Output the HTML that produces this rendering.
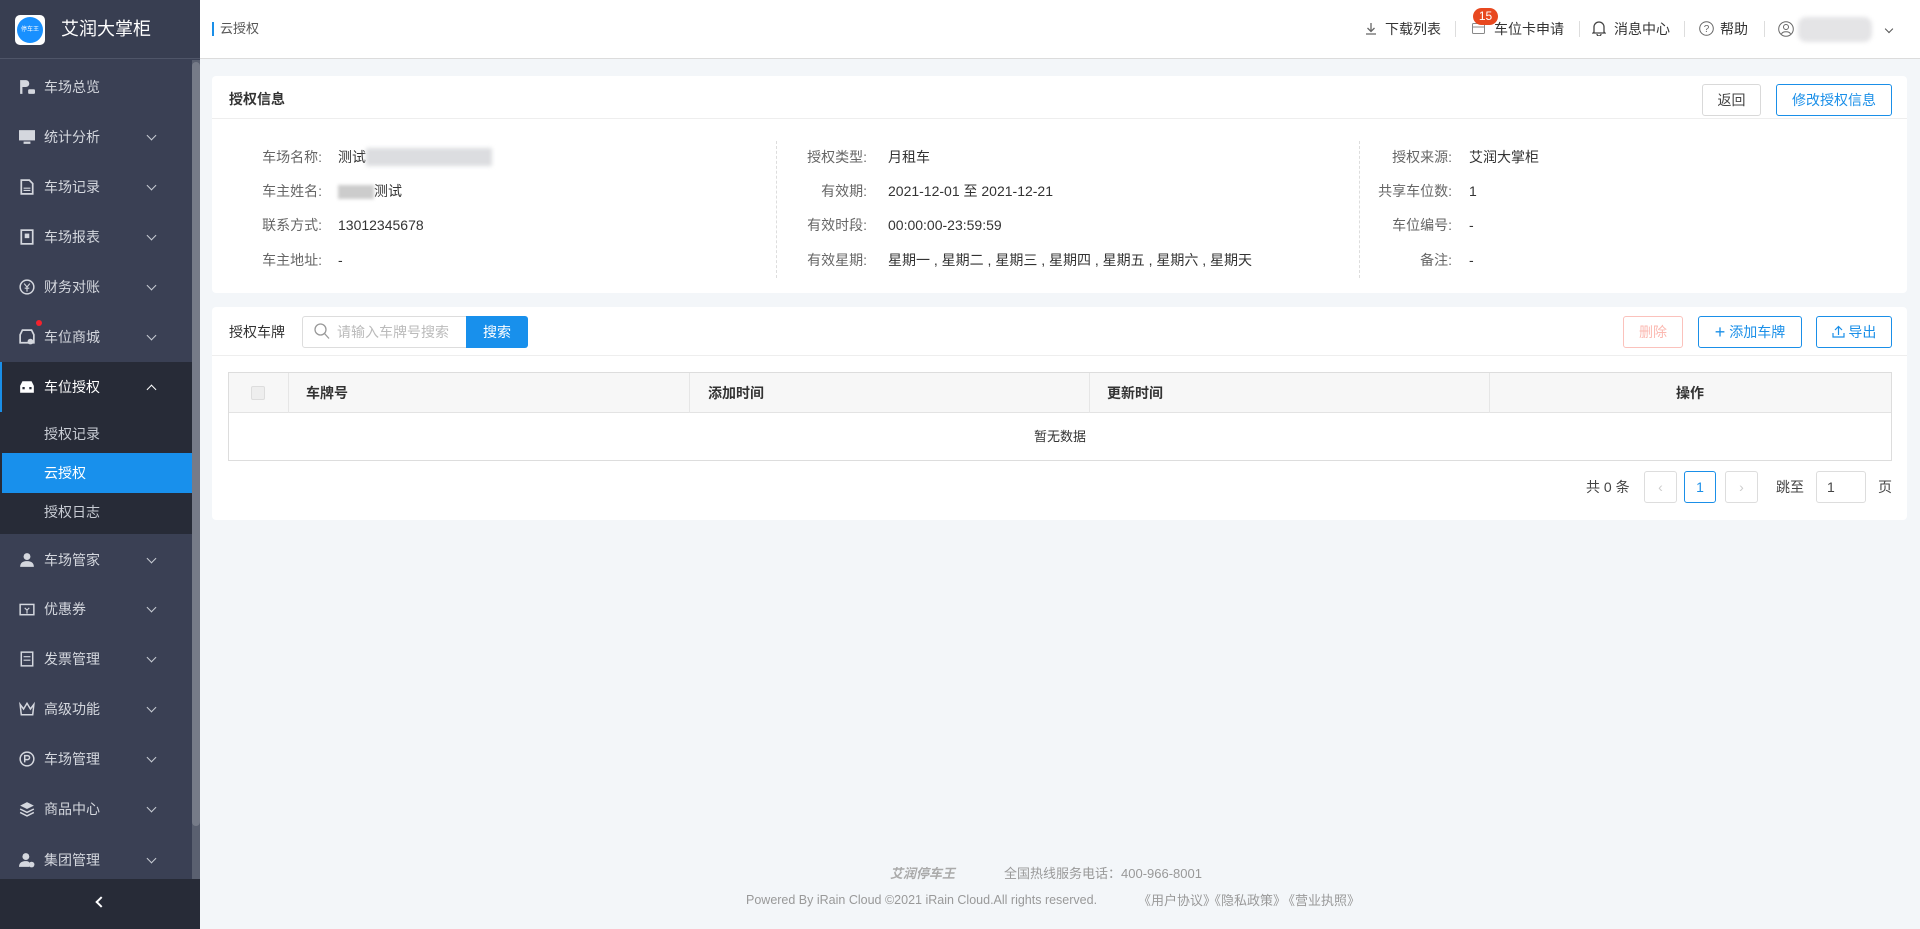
<!DOCTYPE html>
<html><head><meta charset="utf-8"><style>
*{margin:0;padding:0;box-sizing:border-box}
body{width:1920px;height:929px;overflow:hidden;background:#f3f6f9;font-family:"Liberation Sans","Noto Sans CJK SC",sans-serif;font-size:14px;color:#333;position:relative}
.a{position:absolute;white-space:nowrap;line-height:20px}
#side{position:absolute;left:0;top:0;width:200px;height:929px;background:#3a4054}
.mi{position:absolute;left:0;width:192px;height:50px;color:#d4d7de;font-size:14px}
.mi .t{position:absolute;left:44px;top:50%;transform:translateY(-50%)}
.mi .ic{position:absolute;left:19px;top:50%;transform:translateY(-50%);width:16px;height:16px}
.mi .ch{position:absolute;left:148px;top:50%;margin-top:-5px;width:7px;height:7px;border-right:1.5px solid #c8ccd4;border-bottom:1.5px solid #c8ccd4;transform:rotate(45deg)}
.card{position:absolute;background:#fff;border-radius:4px}
.lbl{position:absolute;color:#666;text-align:right;white-space:nowrap;line-height:20px}
.val{position:absolute;color:#333;white-space:nowrap;line-height:20px}
.btn{position:absolute;height:32px;border:1px solid #1a8fe8;border-radius:3px;color:#1a8fe8;text-align:center;line-height:30px;font-size:14px}
.sep{position:absolute;top:21px;width:1px;height:16px;background:#ddd}
.pg{position:absolute;top:471px;height:32px;border:1px solid #ddd;border-radius:3px;text-align:center;line-height:30px;color:#ccc}
</style></head><body>
<div id="side">
 <div class="a" style="left:0;top:0;width:200px;height:59px;background:#383e51;border-bottom:1px solid #4f5568"></div>
 <div class="a" style="left:15px;top:15px;width:30px;height:30px;background:#fff;border-radius:5px"></div>
 <div class="a" style="left:17px;top:17px;width:26px;height:26px;background:#1890ff;border-radius:50%;color:#fff;font-size:6px;line-height:26px;text-align:center">停车王</div>
 <div class="a" style="left:61px;top:17px;color:#fff;font-size:18px;line-height:24px">艾润大掌柜</div>
 <div class="a" style="left:192px;top:60px;width:8px;height:869px;background:#5a6070"></div>
 <div class="a" style="left:192px;top:62px;width:8px;height:764px;background:#767b88;border-radius:4px"></div>
 <div class="mi" style="top:62px"><svg class="ic" viewBox="0 0 14 14"><path d="M1 1h5a3 3 0 010 6H3v6H1z" fill="#d4d7de"/><rect x="8" y="9" width="6" height="4" rx="1" fill="#d4d7de"/></svg><span class="t">车场总览</span></div>
 <div class="mi" style="top:112px"><svg class="ic" viewBox="0 0 14 14"><rect x="0" y="1" width="14" height="9" fill="#d4d7de"/><rect x="4" y="11" width="6" height="2" fill="#d4d7de"/></svg><span class="t">统计分析</span><i class="ch"></i></div>
 <div class="mi" style="top:162px"><svg class="ic" viewBox="0 0 14 14"><path d="M2 1h7l3 3v9H2z" fill="none" stroke="#d4d7de" stroke-width="1.5"/><path d="M4 8h6M4 10h6" stroke="#d4d7de"/></svg><span class="t">车场记录</span><i class="ch"></i></div>
 <div class="mi" style="top:212px"><svg class="ic" viewBox="0 0 14 14"><rect x="2" y="1" width="10" height="12" fill="none" stroke="#d4d7de" stroke-width="1.5"/><rect x="5" y="4" width="4" height="4" fill="#d4d7de"/></svg><span class="t">车场报表</span><i class="ch"></i></div>
 <div class="mi" style="top:262px"><svg class="ic" viewBox="0 0 14 14"><circle cx="7" cy="7" r="6" fill="none" stroke="#d4d7de" stroke-width="1.3"/><path d="M4.5 4l2.5 3 2.5-3M7 7v4M5 8h4" stroke="#d4d7de" fill="none"/></svg><span class="t">财务对账</span><i class="ch"></i></div>
 <div class="mi" style="top:312px"><svg class="ic" viewBox="0 0 14 14"><path d="M1 5l2-4h8l2 4v7H1z" fill="none" stroke="#d4d7de" stroke-width="1.5"/><circle cx="10" cy="11" r="2.5" fill="#d4d7de"/></svg><span class="t">车位商城</span><i class="ch"></i></div>
 <div class="a" style="left:36px;top:320px;width:6px;height:6px;border-radius:50%;background:#f5222d"></div>
 <div class="a" style="left:0;top:362px;width:192px;height:172px;background:#272b37"></div>
 <div class="a" style="left:0;top:362px;width:2px;height:50px;background:#1a8fe8"></div>
 <div class="mi" style="top:362px;color:#fff"><svg class="ic" viewBox="0 0 14 14"><path d="M1 6l2-4h8l2 4v6H1z" fill="#fff"/><rect x="3" y="7" width="2" height="2" fill="#272b37"/><rect x="9" y="7" width="2" height="2" fill="#272b37"/></svg><span class="t">车位授权</span><i class="ch" style="transform:rotate(225deg);margin-top:-1px;border-color:#fff"></i></div>
 <div class="a" style="left:44px;top:424px;color:#c8ccd4">授权记录</div>
 <div class="a" style="left:2px;top:453px;width:190px;height:40px;background:#1890ec"></div>
 <div class="a" style="left:44px;top:463px;color:#fff">云授权</div>
 <div class="a" style="left:44px;top:502px;color:#c8ccd4">授权日志</div>
 <div class="mi" style="top:535px"><svg class="ic" viewBox="0 0 14 14"><circle cx="7" cy="4" r="3" fill="#d4d7de"/><path d="M1 13c0-4 3-5 6-5s6 1 6 5z" fill="#d4d7de"/></svg><span class="t">车场管家</span><i class="ch"></i></div>
 <div class="mi" style="top:584px"><svg class="ic" viewBox="0 0 14 14"><rect x="1" y="3" width="12" height="9" fill="none" stroke="#d4d7de" stroke-width="1.3"/><path d="M5 6l2 2 2-2M7 8v3" stroke="#d4d7de" fill="none"/></svg><span class="t">优惠券</span><i class="ch"></i></div>
 <div class="mi" style="top:634px"><svg class="ic" viewBox="0 0 14 14"><rect x="2" y="1" width="10" height="12" fill="none" stroke="#d4d7de" stroke-width="1.3"/><path d="M4 5h6M4 8h6" stroke="#d4d7de"/></svg><span class="t">发票管理</span><i class="ch"></i></div>
 <div class="mi" style="top:684px"><svg class="ic" viewBox="0 0 14 14"><path d="M1 3l3 4 3-5 3 5 3-4-1 9H2z" fill="none" stroke="#d4d7de" stroke-width="1.3"/></svg><span class="t">高级功能</span><i class="ch"></i></div>
 <div class="mi" style="top:734px"><svg class="ic" viewBox="0 0 14 14"><circle cx="7" cy="7" r="6" fill="none" stroke="#d4d7de" stroke-width="1.3"/><path d="M5 10V4h2.5a1.7 1.7 0 010 3.5H5" fill="none" stroke="#d4d7de" stroke-width="1.3"/></svg><span class="t">车场管理</span><i class="ch"></i></div>
 <div class="mi" style="top:784px"><svg class="ic" viewBox="0 0 14 14"><path d="M7 1l6 3-6 3-6-3z" fill="#d4d7de"/><path d="M1 7l6 3 6-3M1 10l6 3 6-3" fill="none" stroke="#d4d7de" stroke-width="1.3"/></svg><span class="t">商品中心</span><i class="ch"></i></div>
 <div class="mi" style="top:835px"><svg class="ic" viewBox="0 0 14 14"><circle cx="6" cy="4" r="3" fill="#d4d7de"/><path d="M0 13c0-4 3-5 6-5 1 0 2 0 3 1v4z" fill="#d4d7de"/><circle cx="11" cy="11" r="2.5" fill="#d4d7de"/></svg><span class="t">集团管理</span><i class="ch"></i></div>
 <div class="a" style="left:0;top:879px;width:200px;height:50px;background:#272b37"></div>
 <div class="a" style="left:97px;top:898px;width:8px;height:8px;border-left:2px solid #fff;border-bottom:2px solid #fff;transform:rotate(45deg)"></div>
</div>
<div class="a" style="left:200px;top:0;width:1720px;height:59px;background:#fff;border-bottom:1px solid #dcdcdc"></div>
<div class="a" style="left:212px;top:22px;width:2px;height:14px;background:#1a8fe8"></div>
<div class="a" style="left:220px;top:19px;color:#555;font-size:13px">云授权</div>
<svg class="a" style="left:1365px;top:22px" width="12" height="13" viewBox="0 0 12 13"><path d="M6 1v8M2.5 6L6 9.5 9.5 6M1 12h10" stroke="#666" stroke-width="1.3" fill="none"/></svg>
<div class="a" style="left:1385px;top:19px;font-size:14px">下载列表</div>
<div class="sep" style="left:1455px"></div>
<svg class="a" style="left:1472px;top:23px" width="13" height="11" viewBox="0 0 13 11"><rect x="0.5" y="0.5" width="12" height="10" rx="1" fill="none" stroke="#888"/><path d="M0.5 4h12" stroke="#888"/></svg>
<div class="a" style="left:1473px;top:8px;width:25px;height:17px;background:#e8481f;border-radius:9px;color:#fff;font-size:12px;text-align:center;line-height:17px">15</div>
<div class="a" style="left:1494px;top:19px;font-size:14px">车位卡申请</div>
<div class="sep" style="left:1579px"></div>
<svg class="a" style="left:1592px;top:20px" width="14" height="16" viewBox="0 0 14 16"><path d="M2 12V7a5 5 0 0110 0v5l1 1H1z M5 14a2 2 0 004 0" fill="none" stroke="#444" stroke-width="1.3"/></svg>
<div class="a" style="left:1614px;top:19px;font-size:14px">消息中心</div>
<div class="sep" style="left:1684px"></div>
<svg class="a" style="left:1699px;top:21px" width="15" height="15" viewBox="0 0 15 15"><circle cx="7.5" cy="7.5" r="6.8" fill="none" stroke="#666"/><text x="7.5" y="11" font-size="10" text-anchor="middle" fill="#666" font-family="Liberation Sans">?</text></svg>
<div class="a" style="left:1720px;top:19px;font-size:14px">帮助</div>
<div class="sep" style="left:1764px"></div>
<svg class="a" style="left:1778px;top:21px" width="16" height="16" viewBox="0 0 16 16"><circle cx="8" cy="8" r="7.3" fill="none" stroke="#666"/><circle cx="8" cy="6" r="2.5" fill="none" stroke="#666"/><path d="M3.5 13c1-3 8-3 9 0" fill="none" stroke="#666"/></svg>
<div class="a" style="left:1798px;top:17px;width:74px;height:25px;background:#e4e4e6;border-radius:8px;filter:blur(2px)"></div>
<div class="a" style="left:1886px;top:26px;width:6px;height:6px;border-right:1.5px solid #555;border-bottom:1.5px solid #555;transform:rotate(45deg)"></div>
<div class="card" style="left:212px;top:76px;width:1695px;height:217px"></div>
<div class="a" style="left:212px;top:118px;width:1695px;height:1px;background:#eee"></div>
<div class="a" style="left:229px;top:89px;font-weight:bold;font-size:14px">授权信息</div>
<div class="btn" style="left:1702px;top:84px;width:59px;border-color:#d9d9d9;color:#444">返回</div>
<div class="btn" style="left:1776px;top:84px;width:116px">修改授权信息</div>
<div class="a" style="left:776px;top:141px;height:137px;border-left:1px dashed #ddd"></div>
<div class="a" style="left:1359px;top:141px;height:137px;border-left:1px dashed #ddd"></div>
<div class="lbl" style="right:1598px;top:147px">车场名称:</div><div class="val" style="left:338px;top:147px">测试</div>
<div class="a" style="left:366px;top:148px;width:126px;height:18px;background:#dcdde0;filter:blur(2px)"></div>
<div class="lbl" style="right:1598px;top:181px">车主姓名:</div><div class="val" style="left:338px;top:181px"><span style="display:inline-block;width:36px;height:14px;background:#ccc;filter:blur(1.5px);vertical-align:middle"></span>测试</div>
<div class="lbl" style="right:1598px;top:215px">联系方式:</div><div class="val" style="left:338px;top:215px">13012345678</div>
<div class="lbl" style="right:1598px;top:250px">车主地址:</div><div class="val" style="left:338px;top:250px">-</div>
<div class="lbl" style="right:1053px;top:147px">授权类型:</div><div class="val" style="left:888px;top:147px">月租车</div>
<div class="lbl" style="right:1053px;top:181px">有效期:</div><div class="val" style="left:888px;top:181px">2021-12-01 至 2021-12-21</div>
<div class="lbl" style="right:1053px;top:215px">有效时段:</div><div class="val" style="left:888px;top:215px">00:00:00-23:59:59</div>
<div class="lbl" style="right:1053px;top:250px">有效星期:</div><div class="val" style="left:888px;top:250px">星期一 , 星期二 , 星期三 , 星期四 , 星期五 , 星期六 , 星期天</div>
<div class="lbl" style="right:468px;top:147px">授权来源:</div><div class="val" style="left:1469px;top:147px">艾润大掌柜</div>
<div class="lbl" style="right:468px;top:181px">共享车位数:</div><div class="val" style="left:1469px;top:181px">1</div>
<div class="lbl" style="right:468px;top:215px">车位编号:</div><div class="val" style="left:1469px;top:215px">-</div>
<div class="lbl" style="right:468px;top:250px">备注:</div><div class="val" style="left:1469px;top:250px">-</div>
<div class="card" style="left:212px;top:307px;width:1695px;height:213px"></div>
<div class="a" style="left:212px;top:355px;width:1695px;height:1px;background:#eee"></div>
<div class="a" style="left:229px;top:322px;font-size:14px">授权车牌</div>
<div class="a" style="left:302px;top:316px;width:166px;height:32px;border:1px solid #ddd;border-radius:3px 0 0 3px"></div>
<svg class="a" style="left:314px;top:323px" width="16" height="17" viewBox="0 0 16 17"><circle cx="6.5" cy="6.5" r="5.5" fill="none" stroke="#999" stroke-width="1.3"/><path d="M10.5 10.5l4.5 5" stroke="#999" stroke-width="1.3"/></svg>
<div class="a" style="left:337px;top:322px;color:#bbb;font-size:14px">请输入车牌号搜索</div>
<div class="a" style="left:466px;top:316px;width:62px;height:32px;background:#1890ec;border-radius:0 3px 3px 0;color:#fff;text-align:center;line-height:32px">搜索</div>
<div class="btn" style="left:1623px;top:316px;width:60px;border-color:#fbc2bc;color:#fbb8b0">删除</div>
<div class="btn" style="left:1698px;top:316px;width:104px"><span style="font-size:18px;vertical-align:-1px">+</span> 添加车牌</div>
<div class="btn" style="left:1816px;top:316px;width:76px"><svg width="13" height="13" viewBox="0 0 13 13" style="vertical-align:-1px"><path d="M6.5 10V1.5M3 5l3.5-3.5L10 5M1 8v4h11V8" fill="none" stroke="#1a8fe8" stroke-width="1.2"/></svg> 导出</div>
<div class="a" style="left:228px;top:372px;width:1664px;height:89px;border:1px solid #ddd"></div>
<div class="a" style="left:229px;top:373px;width:1662px;height:40px;background:#f7f7f7;border-bottom:1px solid #e3e3e3"></div>
<div class="a" style="left:288px;top:373px;width:1px;height:40px;background:#e6e6e6"></div>
<div class="a" style="left:689px;top:373px;width:1px;height:40px;background:#e6e6e6"></div>
<div class="a" style="left:1089px;top:373px;width:1px;height:40px;background:#e6e6e6"></div>
<div class="a" style="left:1489px;top:373px;width:1px;height:40px;background:#e6e6e6"></div>
<div class="a" style="left:251px;top:386px;width:14px;height:14px;border:1px solid #ddd;border-radius:2px;background:#eee"></div>
<div class="a" style="left:306px;top:383px;font-weight:bold;color:#333">车牌号</div>
<div class="a" style="left:708px;top:383px;font-weight:bold;color:#333">添加时间</div>
<div class="a" style="left:1107px;top:383px;font-weight:bold;color:#333">更新时间</div>
<div class="a" style="left:1676px;top:383px;font-weight:bold;color:#333">操作</div>
<div class="a" style="left:1034px;top:427px;font-size:13px;color:#333">暂无数据</div>
<div class="a" style="left:1586px;top:477px;color:#444">共 0 条</div>
<div class="pg" style="left:1644px;width:33px">‹</div>
<div class="pg" style="left:1684px;width:32px;border-color:#1a8fe8;color:#1a8fe8">1</div>
<div class="pg" style="left:1725px;width:33px">›</div>
<div class="a" style="left:1776px;top:477px;color:#444">跳至</div>
<div class="pg" style="left:1816px;width:50px;text-align:left;padding-left:10px;color:#444">1</div>
<div class="a" style="left:1878px;top:477px;color:#444">页</div>
<div class="a" style="left:890px;top:864px;color:#aaa;font-size:13px;font-style:italic;font-weight:bold">艾润停车王</div>
<div class="a" style="left:1004px;top:864px;color:#999;font-size:13px">全国热线服务电话：400-966-8001</div>
<div class="a" style="left:746px;top:890px;color:#999;font-size:12.5px">Powered By iRain Cloud ©2021 iRain Cloud.All rights reserved.</div>
<div class="a" style="left:1138px;top:891px;color:#999;font-size:13px">《用户协议》</div>
<div class="a" style="left:1208px;top:891px;color:#999;font-size:13px">《隐私政策》</div>
<div class="a" style="left:1282px;top:891px;color:#999;font-size:13px">《营业执照》</div>
</body></html>
